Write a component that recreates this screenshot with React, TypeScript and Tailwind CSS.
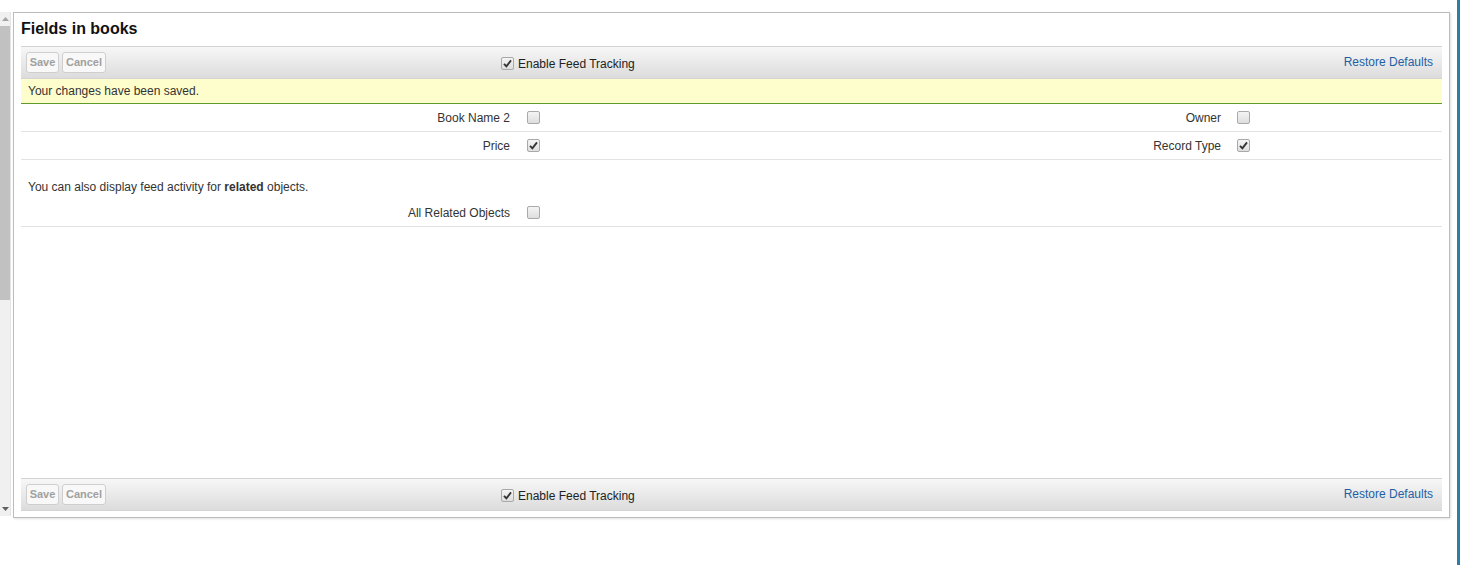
import * as React from 'react'

function Check({ checked }: { checked?: boolean }) {
  return (
    <span className="inline-flex h-[13px] w-[13px] items-center justify-center rounded-[2px] border border-[#a9a9a9] bg-gradient-to-b from-[#f4f4f4] to-[#dedede]">
      {checked && (
        <svg width="9" height="9" viewBox="0 0 9 9">
          <path d="M1 4.8 L3.4 7.3 L8 1.4" fill="none" stroke="#333" strokeWidth="1.9" />
        </svg>
      )}
    </span>
  )
}

function ButtonBar() {
  return (
    <div className="flex h-[33px] shrink-0 items-center border-y border-[#d4d4d4] bg-gradient-to-b from-[#f7f7f7] to-[#dcdcdd] pl-[5px] pr-[9px]">
      <div className="flex w-[475px] gap-[3px]">
        <button className="h-[21px] w-[33px] rounded-[3px] border border-[#cfcfcf] bg-[#f8f8f8] text-[11px] font-bold text-[#a0a0a0]">
          Save
        </button>
        <button className="h-[21px] w-[44px] rounded-[3px] border border-[#cfcfcf] bg-[#f8f8f8] text-[11px] font-bold text-[#a0a0a0]">
          Cancel
        </button>
      </div>
      <div className="flex items-center gap-[4px] pt-[1px] text-[12px] text-[#222]">
        <Check checked />
        <span className="pt-[2px]">Enable Feed Tracking</span>
      </div>
      <a className="ml-auto pb-[1px] text-[12px] text-[#1f5fa6]">Restore Defaults</a>
    </div>
  )
}

function FieldRow({ items }: { items: [string, boolean][] }) {
  return (
    <div className="flex h-[28px] shrink-0 items-center border-b border-[#e3e3e3] text-[12px] text-[#333]">
      <span className="w-[489px] text-right">{items[0][0]}</span>
      <span className="flex w-[222px] pl-[17px]">
        <Check checked={items[0][1]} />
      </span>
      {items[1] && (
        <>
          <span className="w-[489px] text-right">{items[1][0]}</span>
          <span className="flex pl-[16px]">
            <Check checked={items[1][1]} />
          </span>
        </>
      )}
    </div>
  )
}

export default function App() {
  return (
    <div
      className="flex h-[565px] w-[1462px] overflow-hidden bg-white"
      style={{ fontFamily: '"Liberation Sans", Arial, sans-serif' }}
    >
      {/* scrollbar */}
      <div className="mt-[12px] flex h-[504px] w-[11px] shrink-0 flex-col border-r border-[#e4e4e4] bg-[#f0f0f0]">
        <div className="flex h-[14px] items-center justify-center">
          <svg width="7" height="4" viewBox="0 0 7 4">
            <path d="M0 4 L3.5 0 L7 4 Z" fill="#a3a3a3" />
          </svg>
        </div>
        <div className="h-[274px] w-[10px] bg-[#c1c1c1]" />
        <div className="flex-1" />
        <div className="flex h-[14px] items-center justify-center">
          <svg width="7" height="4" viewBox="0 0 7 4">
            <path d="M0 0 L3.5 4 L7 0 Z" fill="#606060" />
          </svg>
        </div>
      </div>

      {/* dialog */}
      <div className="ml-[2px] mt-[12px] flex h-[506px] w-[1437px] shrink-0 flex-col border border-[#bcbcbc] px-[7px] pb-[6px] shadow-[1px_1px_2px_rgba(0,0,0,0.12)]">
        <div className="flex h-[33px] shrink-0 items-center pb-[1px] text-[16px] font-bold text-[#111]">
          Fields in books
        </div>
        <ButtonBar />
        <div className="flex h-[25px] shrink-0 items-center border-b border-[#5e9b2b] bg-[#fefecd] pl-[7px] text-[12px] text-[#333]">
          Your changes have been saved.
        </div>
        <FieldRow items={[['Book Name 2', false], ['Owner', false]]} />
        <FieldRow items={[['Price', true], ['Record Type', true]]} />
        <div className="flex h-[39px] shrink-0 items-end pb-[3px] pl-[7px] text-[12px] text-[#333]">
          <span>
            You can also display feed activity for <b>related</b> objects.
          </span>
        </div>
        <FieldRow items={[['All Related Objects', false]]} />
        <div className="flex-1" />
        <ButtonBar />
      </div>

      {/* right edge line */}
      <div className="ml-[7px] h-full w-[3px] shrink-0 bg-[#2e7ea3]" />
    </div>
  )
}
